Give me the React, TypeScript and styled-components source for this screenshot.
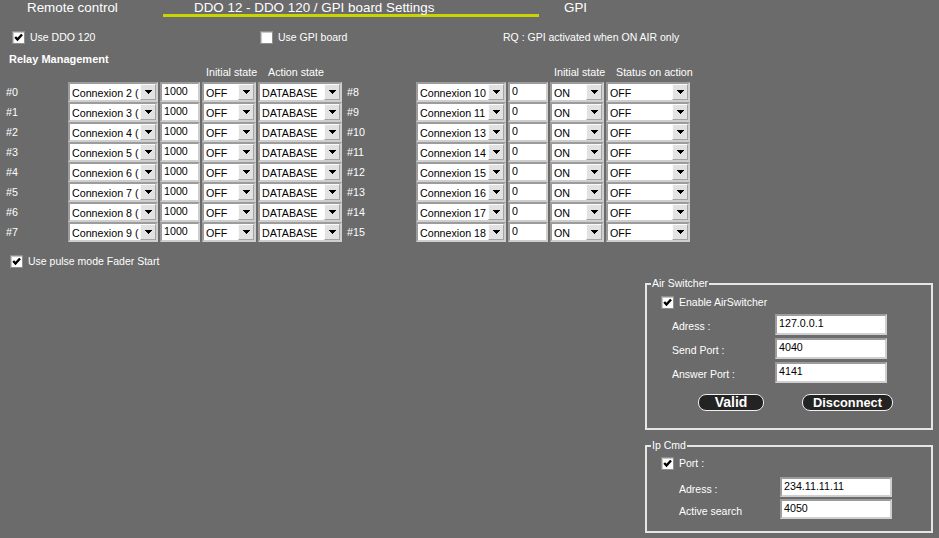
import React from 'react';
import styled, { createGlobalStyle } from 'styled-components';

const Global = createGlobalStyle`
  html, body { margin: 0; padding: 0; background: #6b6b6b; }
  body { font-family: "Liberation Sans", Arial, sans-serif; font-size: 10.5px; color: #fff; }
`;

const Page = styled.div`
  width: 939px;
  height: 538px;
  overflow: hidden;
  background: #6b6b6b;
  display: flex;
  flex-direction: column;
`;

const TabBar = styled.div`
  display: flex;
  height: 17px;
`;

const Tab = styled.div<{ $w?: number; $indent: number; $active?: boolean }>`
  box-sizing: border-box;
  width: ${(p) => (p.$w ? `${p.$w}px` : 'auto')};
  flex: ${(p) => (p.$w ? 'none' : '1')};
  height: 17px;
  padding: 2px 0 0 ${(p) => p.$indent}px;
  font-size: 13.4px;
  line-height: 12px;
  color: #fff;
  white-space: nowrap;
  border-bottom: 3px solid ${(p) => (p.$active ? '#c9d400' : 'transparent')};
`;

const OptionsRow = styled.div`
  display: grid;
  grid-template-columns: 248px 243px auto;
  align-items: center;
  margin-top: 13px;
  padding-left: 12px;
  height: 14px;
`;

const CheckLabel = styled.label`
  display: flex;
  align-items: center;
  gap: 5px;
  line-height: 13px;
  white-space: nowrap;
`;

const Box = styled.span`
  box-sizing: border-box;
  width: 13px;
  height: 13px;
  flex: none;
  background: #fff;
  border: 1px solid #8e8e8e;
  box-shadow: inset 1px 1px 0 #c8c8c8;
  display: inline-flex;
  align-items: center;
  justify-content: center;
`;

const Note = styled.span`
  line-height: 13px;
  white-space: nowrap;
`;

const Title = styled.div`
  margin-top: 9px;
  padding-left: 9px;
  font-weight: bold;
  font-size: 11px;
  line-height: 13px;
`;

const Tables = styled.div`
  display: flex;
  gap: 5px;
  padding-left: 6px;
`;

const RelayGrid = styled.div<{ $labelW: number }>`
  display: grid;
  grid-template-columns: ${(p) => p.$labelW}px 90px 40px 54px 84px;
  grid-template-rows: 16px;
  grid-auto-rows: 20px;
  column-gap: 2px;
`;

const HeadCell = styled.div<{ $indent?: number }>`
  padding-left: ${(p) => p.$indent ?? 0}px;
  font-size: 10.7px;
  line-height: 13px;
  white-space: nowrap;
`;

const RowLabel = styled.div`
  font-size: 10.7px;
  line-height: 20px;
`;

const SelectBox = styled.div`
  box-sizing: border-box;
  height: 20px;
  background: #fff;
  border: 2px solid;
  border-color: #9c9c9c #cfcfcf #cfcfcf #9c9c9c;
  display: flex;
  overflow: hidden;
`;

const SelectText = styled.span`
  flex: 1;
  min-width: 0;
  overflow: hidden;
  white-space: nowrap;
  color: #000;
  font-size: 10.7px;
  line-height: 14px;
  padding: 2px 0 0 2px;
`;

const DropBtn = styled.span`
  box-sizing: border-box;
  flex: none;
  width: 16px;
  height: 16px;
  background: #e2e2e2;
  border: 1px solid;
  border-color: #fbfbfb #a4a4a4 #a4a4a4 #fbfbfb;
  display: flex;
  align-items: center;
  justify-content: center;
`;

const Field = styled.div<{ $h?: number }>`
  box-sizing: border-box;
  height: ${(p) => p.$h ?? 20}px;
  background: #fff;
  border: 2px solid;
  border-color: #9c9c9c #cfcfcf #cfcfcf #9c9c9c;
  color: #000;
  font-size: 10.7px;
  line-height: 13px;
  padding: 1px 0 0 2px;
  white-space: nowrap;
  overflow: hidden;
`;

const PulseRow = styled.div`
  margin-top: 13px;
  padding-left: 10px;
  height: 13px;
  display: flex;
`;

const Side = styled.div`
  align-self: flex-end;
  width: 288px;
  margin-right: 6px;
  margin-top: 9px;
  display: flex;
  flex-direction: column;
  gap: 9px;
`;

const Group = styled.fieldset<{ $pb: number }>`
  box-sizing: border-box;
  margin: 0;
  padding: 0 0 ${(p) => p.$pb}px 0;
  min-width: 0;
  border: 2px solid #e6e6e6;
  display: flex;
  flex-direction: column;
`;

const Legend = styled.legend`
  margin-left: 4px;
  padding: 0 1px;
  line-height: 13px;
  font-size: 10.5px;
  color: #fff;
`;

const GroupCheck = styled.div<{ $mt: number }>`
  margin: ${(p) => p.$mt}px 0 0 14px;
  height: 13px;
  display: flex;
`;

const FormGrid = styled.div<{ $ml: number; $mt: number; $labelW: number; $rowH: number; $gap: number }>`
  display: grid;
  margin: ${(p) => p.$mt}px 0 0 ${(p) => p.$ml}px;
  grid-template-columns: ${(p) => p.$labelW}px 112px;
  grid-auto-rows: ${(p) => p.$rowH}px;
  row-gap: ${(p) => p.$gap}px;
`;

const FormLabel = styled.div`
  padding-top: 6px;
  line-height: 13px;
  white-space: nowrap;
`;

const Buttons = styled.div`
  display: flex;
  gap: 38px;
  margin: 11px 0 0 51px;
`;

const Pill = styled.button<{ $w: number; $size: number }>`
  box-sizing: border-box;
  width: ${(p) => p.$w}px;
  height: 17px;
  padding: 0;
  border: 1px solid #f0f0f0;
  border-radius: 8px;
  background: #232323;
  color: #fff;
  font-family: "Liberation Sans", Arial, sans-serif;
  font-weight: bold;
  font-size: ${(p) => p.$size}px;
  line-height: 15px;
  text-align: center;
`;

const Check = () => (
  <svg width="9" height="9" viewBox="0 0 9 9">
    <polyline points="1.2,4 3.5,6.5 8,1.5" fill="none" stroke="#000" strokeWidth="2.4" />
  </svg>
);

const CheckBox = ({ checked, children }: { checked?: boolean; children: React.ReactNode }) => (
  <CheckLabel>
    <Box>{checked && <Check />}</Box>
    {children}
  </CheckLabel>
);

const Triangle = () => (
  <svg width="7" height="4" viewBox="0 0 7 4" shapeRendering="crispEdges">
    <polygon points="0,0 7,0 3.5,4" fill="#000" />
  </svg>
);

const Select = ({ value }: { value: string }) => (
  <SelectBox>
    <SelectText>{value}</SelectText>
    <DropBtn>
      <Triangle />
    </DropBtn>
  </SelectBox>
);

type Row = { label: string; conn: string; delay: string; initial: string; action: string };

const leftRows: Row[] = [2, 3, 4, 5, 6, 7, 8, 9].map((n, i) => ({
  label: `#${i}`,
  conn: `Connexion ${n} (`,
  delay: '1000',
  initial: 'OFF',
  action: 'DATABASE',
}));

const rightRows: Row[] = [10, 11, 13, 14, 15, 16, 17, 18].map((n, i) => ({
  label: `#${i + 8}`,
  conn: `Connexion ${n}`,
  delay: '0',
  initial: 'ON',
  action: 'OFF',
}));

const RelayTable = ({ rows, labelW, actionHead }: { rows: Row[]; labelW: number; actionHead: string }) => (
  <RelayGrid $labelW={labelW}>
    <HeadCell />
    <HeadCell />
    <HeadCell />
    <HeadCell $indent={4}>Initial state</HeadCell>
    <HeadCell $indent={10}>{actionHead}</HeadCell>
    {rows.map((r) => (
      <React.Fragment key={r.label}>
        <RowLabel>{r.label}</RowLabel>
        <Select value={r.conn} />
        <Field>{r.delay}</Field>
        <Select value={r.initial} />
        <Select value={r.action} />
      </React.Fragment>
    ))}
  </RelayGrid>
);

export default function App() {
  return (
    <Page>
      <Global />
      <TabBar>
        <Tab $w={163} $indent={27}>Remote control</Tab>
        <Tab $w={376} $indent={31} $active>DDO 12 - DDO 120 / GPI board Settings</Tab>
        <Tab $indent={25}>GPI</Tab>
      </TabBar>

      <OptionsRow>
        <CheckBox checked>Use DDO 120</CheckBox>
        <CheckBox>Use GPI board</CheckBox>
        <Note>RQ : GPI activated when ON AIR only</Note>
      </OptionsRow>

      <Title>Relay Management</Title>

      <Tables>
        <RelayTable rows={leftRows} labelW={60} actionHead="Action state" />
        <RelayTable rows={rightRows} labelW={67} actionHead="Status on action" />
      </Tables>

      <PulseRow>
        <CheckBox checked>Use pulse mode Fader Start</CheckBox>
      </PulseRow>

      <Side>
        <Group $pb={17}>
          <Legend>Air Switcher</Legend>
          <GroupCheck $mt={6}>
            <CheckBox checked>Enable AirSwitcher</CheckBox>
          </GroupCheck>
          <FormGrid $ml={25} $mt={5} $labelW={103} $rowH={21} $gap={3}>
            <FormLabel>Adress :</FormLabel>
            <Field $h={21}>127.0.0.1</Field>
            <FormLabel>Send Port :</FormLabel>
            <Field $h={21}>4040</Field>
            <FormLabel>Answer Port :</FormLabel>
            <Field $h={21}>4141</Field>
          </FormGrid>
          <Buttons>
            <Pill $w={66} $size={14}>Valid</Pill>
            <Pill $w={91} $size={12.8}>Disconnect</Pill>
          </Buttons>
        </Group>

        <Group $pb={12}>
          <Legend>Ip Cmd</Legend>
          <GroupCheck $mt={5}>
            <CheckBox checked>Port :</CheckBox>
          </GroupCheck>
          <FormGrid $ml={32} $mt={7} $labelW={101} $rowH={20} $gap={2}>
            <FormLabel>Adress :</FormLabel>
            <Field>234.11.11.11</Field>
            <FormLabel>Active search</FormLabel>
            <Field>4050</Field>
          </FormGrid>
        </Group>
      </Side>
    </Page>
  );
}
